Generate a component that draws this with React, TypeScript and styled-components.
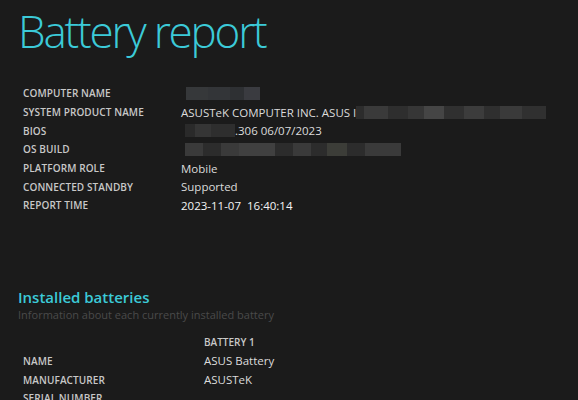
import styled, { createGlobalStyle } from "styled-components";

const GlobalStyle = createGlobalStyle`
  html, body {
    margin: 0;
    padding: 0;
    background-color: #1b1b1b;
  }
  body {
    font-family: "Open Sans", "Noto Sans", sans-serif;
    overflow: hidden;
  }
`;

type Cell = { w: number; c: string };

const productCells: Cell[] = [
  { w: 8, c: "#2c2c2c" },
  { w: 24, c: "#3a3a3a" },
  { w: 20, c: "#2e2e2e" },
  { w: 16, c: "#363636" },
  { w: 20, c: "#454545" },
  { w: 20, c: "#303030" },
  { w: 20, c: "#3c3c3c" },
  { w: 16, c: "#2f2f2f" },
  { w: 22, c: "#3a3a3a" },
  { w: 24, c: "#303030" },
];

const computerCells: Cell[] = [
  { w: 22, c: "#36383a" },
  { w: 22, c: "#333538" },
  { w: 14, c: "#2e3033" },
  { w: 16, c: "#3a3b40" },
];

const biosCells: Cell[] = [
  { w: 10, c: "#2a2a2a" },
  { w: 16, c: "#353535" },
  { w: 24, c: "#2e2e2e" },
];

const osCells: Cell[] = [
  { w: 18, c: "#3a3a3a" },
  { w: 18, c: "#2c2c2c" },
  { w: 18, c: "#3a3a3a" },
  { w: 36, c: "#404040" },
  { w: 18, c: "#2c2c2c" },
  { w: 18, c: "#3a3a3a" },
  { w: 16, c: "#2c2c2c" },
  { w: 20, c: "#3c3d38" },
  { w: 18, c: "#2c2c2c" },
  { w: 36, c: "#3a3a3a" },
];

function Redacted({ cells }: { cells: Cell[] }) {
  return (
    <Mosaic>
      {cells.map((cell, i) => (
        <Pixel key={i} style={{ width: cell.w, background: cell.c }} />
      ))}
    </Mosaic>
  );
}

const summary = [
  { label: "COMPUTER NAME", value: <Redacted cells={computerCells} />, pad: 5 },
  {
    label: "SYSTEM PRODUCT NAME",
    value: (
      <>
        ASUSTeK COMPUTER INC. ASUS I
        <Redacted cells={productCells} />
      </>
    ),
  },
  {
    label: "BIOS",
    value: (
      <>
        <Redacted cells={biosCells} />
        .306 06/07/2023
      </>
    ),
    pad: 4,
  },
  { label: "OS BUILD", value: <Redacted cells={osCells} />, pad: 4 },
  { label: "PLATFORM ROLE", value: "Mobile" },
  { label: "CONNECTED STANDBY", value: "Supported" },
  { label: "REPORT TIME", value: "2023-11-07\u00a0\u00a016:40:14", strong: true },
];

const batteries = [
  { label: "NAME", value: "ASUS Battery" },
  { label: "MANUFACTURER", value: "ASUSTeK" },
  { label: "SERIAL NUMBER", value: "\u00a0" },
];

function App() {
  return (
    <Page>
      <GlobalStyle />
      <Title>Battery report</Title>
      <Table>
        {summary.map((row) => (
          <Row key={row.label}>
            <Label>{row.label}</Label>
            <Value pad={row.pad ?? 0} strong={!!row.strong}>
              {row.value}
            </Value>
          </Row>
        ))}
      </Table>
      <Section>
        <SectionTitle>Installed batteries</SectionTitle>
        <SectionNote>Information about each currently installed battery</SectionNote>
        <BatteryTable>
          <Row>
            <BatteryLabel />
            <ColumnHead>BATTERY 1</ColumnHead>
          </Row>
          {batteries.map((row) => (
            <Row key={row.label}>
              <BatteryLabel>{row.label}</BatteryLabel>
              <Value pad={0} strong={false}>
                {row.value}
              </Value>
            </Row>
          ))}
        </BatteryTable>
      </Section>
    </Page>
  );
}

const Page = styled.div`
  width: 578px;
  height: 400px;
  background-color: #1b1b1b;
  padding: 0 0 0 18px;
  box-sizing: border-box;
  overflow: hidden;
`;

const Title = styled.h1`
  margin: 0;
  padding-top: 1px;
  font-family: "Open Sans", sans-serif;
  font-weight: 350;
  font-size: 44px;
  line-height: 60px;
  letter-spacing: -2.2px;
  color: #3ccad8;
`;

const Table = styled.div`
  display: flex;
  flex-direction: column;
  margin: 23px 0 0 5px;
`;

const Row = styled.div`
  display: flex;
  align-items: center;
  height: 18.7px;
`;

const Label = styled.div`
  width: 158px;
  flex-shrink: 0;
  font-size: 10px;
  font-weight: 600;
  color: #c8c8c8;
  letter-spacing: 0.1px;
`;

const Value = styled.div<{ pad: number; strong: boolean }>`
  display: flex;
  align-items: center;
  padding-left: ${(p) => p.pad}px;
  font-size: 11.5px;
  color: ${(p) => (p.strong ? "#f4f4f4" : "#dcdcdc")};
  white-space: pre;
`;

const Mosaic = styled.span`
  display: inline-flex;
  height: 13px;
`;

const Pixel = styled.span`
  display: block;
  height: 100%;
`;

const Section = styled.div`
  margin-top: 72px;
`;

const SectionTitle = styled.h2`
  margin: 0;
  font-size: 15px;
  font-weight: 600;
  line-height: 20px;
  color: #3ccad8;
`;

const SectionNote = styled.div`
  font-size: 11px;
  line-height: 16px;
  color: #4a4a4a;
`;

const BatteryTable = styled.div`
  display: flex;
  flex-direction: column;
  margin: 10px 0 0 5px;
`;

const BatteryLabel = styled(Label)`
  width: 181px;
`;

const ColumnHead = styled.div`
  font-size: 10px;
  font-weight: 600;
  color: #c8c8c8;
`;

export default App;
